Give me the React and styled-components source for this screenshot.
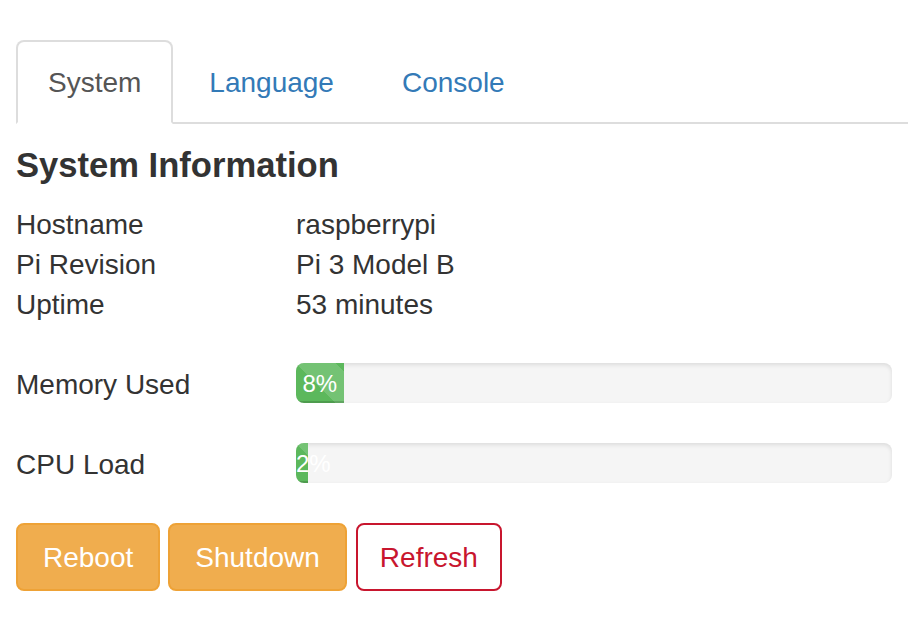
import React from "react";
import styled, { createGlobalStyle, css } from "styled-components";

const GlobalStyle = createGlobalStyle`
  html, body {
    margin: 0;
    padding: 0;
    background: #fff;
  }
  body {
    font-family: "Liberation Sans", Arial, Helvetica, sans-serif;
    font-size: 28px;
    line-height: 40px;
    color: #333;
  }
`;

const info = [
  ["Hostname", "raspberrypi"],
  ["Pi Revision", "Pi 3 Model B"],
  ["Uptime", "53 minutes"],
];

const stats = [
  ["Memory Used", 8],
  ["CPU Load", 2],
];

function App() {
  return (
    <>
      <GlobalStyle />
      <Page>
        <Tabs>
          <Tab active>System</Tab>
          <Tab>Language</Tab>
          <Tab>Console</Tab>
        </Tabs>
        <Content>
          <Heading>System Information</Heading>
          <InfoGrid>
            {info.map(([label, value]) => (
              <React.Fragment key={label}>
                <Label>{label}</Label>
                <Value>{value}</Value>
              </React.Fragment>
            ))}
          </InfoGrid>
          {stats.map(([label, pct]) => (
            <StatRow key={label}>
              <StatLabel>{label}</StatLabel>
              <Progress>
                <Bar style={{ width: pct + "%" }}>{pct}%</Bar>
              </Progress>
            </StatRow>
          ))}
          <Buttons>
            <Button variant="warning">Reboot</Button>
            <Button variant="warning">Shutdown</Button>
            <Button variant="danger">Refresh</Button>
          </Buttons>
        </Content>
      </Page>
    </>
  );
}

export default App;

const Page = styled.div`
  padding: 40px 0 0 16px;
`;

const Tabs = styled.ul`
  display: flex;
  list-style: none;
  margin: 0;
  padding: 0;
  border-bottom: 2px solid #ddd;
`;

const Tab = styled.li`
  margin-right: 4px;
  margin-bottom: -2px;
  padding: 21px 30px 19px;
  line-height: 40px;
  border: 2px solid transparent;
  border-radius: 8px 8px 0 0;
  color: #337ab7;
  cursor: pointer;

  ${(p) =>
    p.active &&
    css`
      color: #555;
      background: #fff;
      border-color: #ddd;
      border-bottom-color: transparent;
    `}
`;

const Content = styled.div`
  padding-right: 16px;
`;

const Heading = styled.h4`
  margin: 23px 0 21px;
  font-size: 34.6px;
  line-height: 37px;
  font-weight: 700;
  color: #333;
`;

const InfoGrid = styled.div`
  display: grid;
  grid-template-columns: 280px 1fr;
  margin-bottom: 38px;
`;

const Label = styled.div`
  line-height: 40px;
`;

const Value = styled.div`
  line-height: 40px;
`;

const StatRow = styled.div`
  display: grid;
  grid-template-columns: 280px 1fr;
  align-items: start;
  margin-bottom: 38px;
`;

const StatLabel = styled.div`
  padding-top: 2px;
  line-height: 40px;
`;

const Progress = styled.div`
  height: 40px;
  overflow: hidden;
  background: #f5f5f5;
  border-radius: 8px;
  box-shadow: inset 0 2px 4px rgba(0, 0, 0, 0.1);
`;

const Bar = styled.div`
  height: 100%;
  font-size: 24px;
  line-height: 41px;
  color: #fff;
  text-align: center;
  white-space: nowrap;
  background-color: #5cb85c;
  background-image: linear-gradient(
    45deg,
    rgba(255, 255, 255, 0.15) 25%,
    transparent 25%,
    transparent 50%,
    rgba(255, 255, 255, 0.15) 50%,
    rgba(255, 255, 255, 0.15) 75%,
    transparent 75%,
    transparent
  );
  background-size: 80px 80px;
  box-shadow: inset 0 -2px 0 rgba(0, 0, 0, 0.15);
`;

const Buttons = styled.div`
  display: flex;
  gap: 8px;
`;

const Button = styled.button`
  font-family: inherit;
  font-size: 28px;
  line-height: 40px;
  padding: 13px 25px 11px;
  border-radius: 8px;
  border: 2px solid;
  cursor: pointer;

  ${(p) =>
    p.variant === "warning"
      ? css`
          color: #fff;
          background: #f0ad4e;
          border-color: #eea236;
        `
      : css`
          padding-left: 22px;
          padding-right: 22px;
          color: #c8162e;
          background: #fff;
          border-color: #c8162e;
          margin-left: 1px;
        `}
`;
